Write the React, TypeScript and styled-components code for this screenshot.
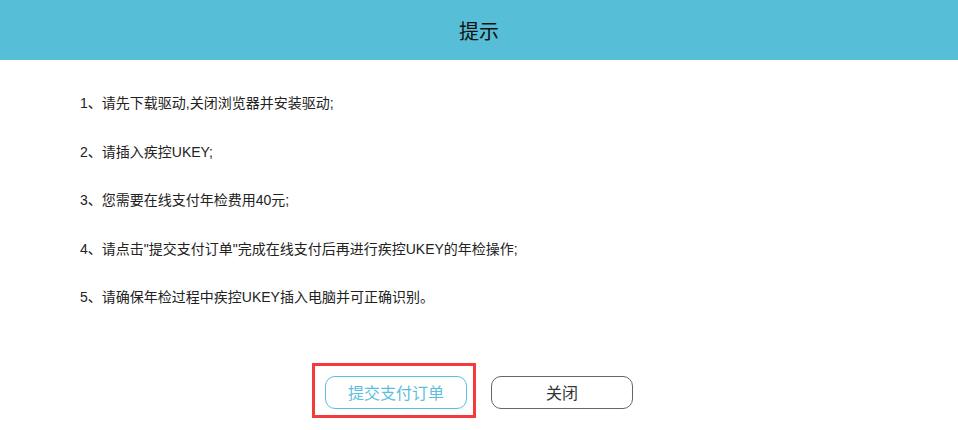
import React from "react";
import styled, { createGlobalStyle } from "styled-components";

const Global = createGlobalStyle`
  html, body { margin: 0; padding: 0; background: #fff; }
  body {
    font-family: "Liberation Sans", "Noto Sans CJK SC", sans-serif;
    color: #222;
  }
`;

const Dialog = styled.div`
  width: 958px;
  height: 430px;
  background: #fff;
  display: flex;
  flex-direction: column;
`;

const Header = styled.div`
  height: 60px;
  background: #57bed8;
  display: flex;
  align-items: center;
  justify-content: center;
  font-size: 20px;
  color: #111;
  font-family: "Noto Sans CJK SC", sans-serif;
`;

const List = styled.ol`
  list-style: none;
  margin: 0;
  padding: 19px 0 0 80px;
`;

const Item = styled.li`
  font-size: 14px;
  line-height: 48.5px;
  height: 48.5px;
  color: #222;
  white-space: nowrap;
`;

const ButtonRow = styled.div`
  display: flex;
  justify-content: center;
  gap: 24px;
  margin-top: 54px;
`;

const Highlight = styled.div`
  position: relative;
  display: flex;
  &::before {
    content: "";
    position: absolute;
    top: -13px;
    left: -13px;
    right: -9px;
    bottom: -9px;
    border: 3px solid #f43a3a;
    pointer-events: none;
  }
`;

const Button = styled.button<{ $variant: "primary" | "default" }>`
  width: 142px;
  height: 33px;
  border-radius: 10px;
  background: #fff;
  font-family: "Noto Sans CJK SC", sans-serif;
  font-size: 16px;
  padding: 0;
  cursor: pointer;
  border: 1px solid ${(p) => (p.$variant === "primary" ? "#5bc0de" : "#666")};
  color: ${(p) => (p.$variant === "primary" ? "#5bc0de" : "#333")};
`;

const items = [
  "1、请先下载驱动,关闭浏览器并安装驱动;",
  "2、请插入疾控UKEY;",
  "3、您需要在线支付年检费用40元;",
  '4、请点击"提交支付订单"完成在线支付后再进行疾控UKEY的年检操作;',
  "5、请确保年检过程中疾控UKEY插入电脑并可正确识别。",
];

export default function App() {
  return (
    <>
      <Global />
      <Dialog>
        <Header>提示</Header>
        <List>
          {items.map((t) => (
            <Item key={t}>{t}</Item>
          ))}
        </List>
        <ButtonRow>
          <Highlight>
            <Button $variant="primary">提交支付订单</Button>
          </Highlight>
          <Button $variant="default">关闭</Button>
        </ButtonRow>
      </Dialog>
    </>
  );
}
